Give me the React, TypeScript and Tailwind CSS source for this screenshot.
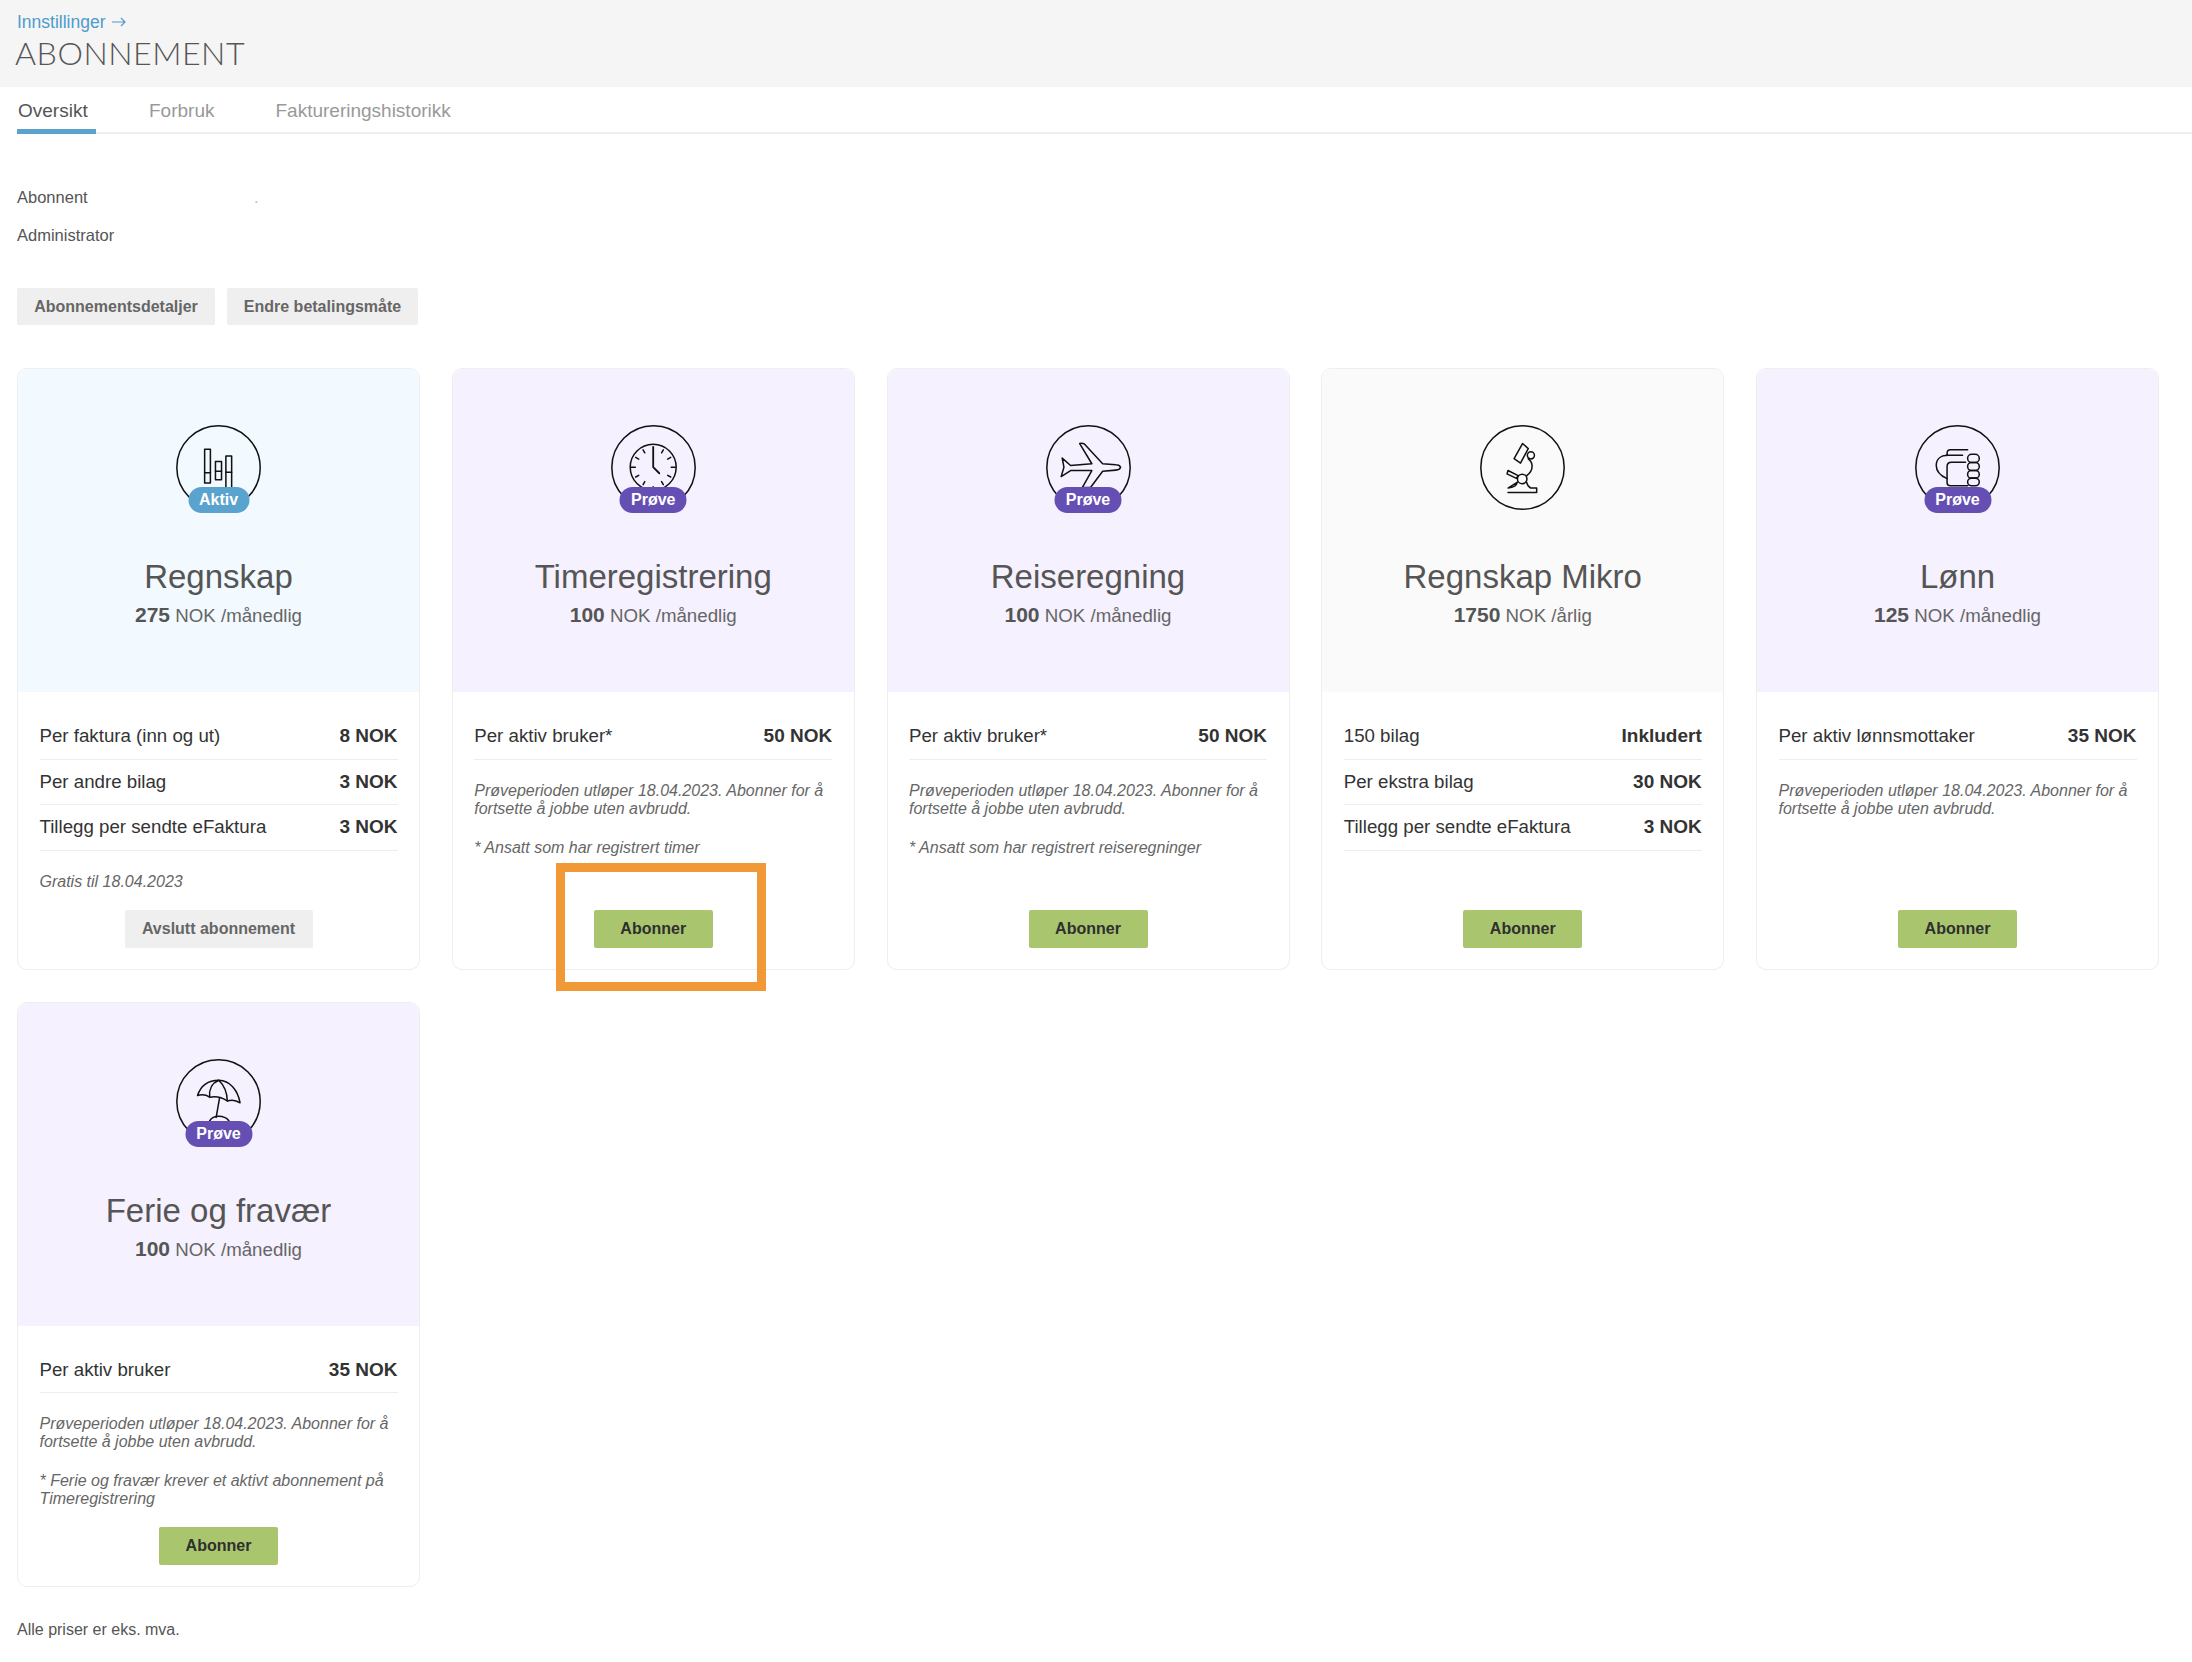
import React from 'react';

type Row = { label: string; value: string };

type Plan = {
  name: string;
  price: string;
  period: string;
  badge?: 'Aktiv' | 'Prøve';
  headerBg: string;
  icon: React.ReactNode;
  rows: Row[];
  notes: string[][];
  action: 'subscribe' | 'cancel';
  highlighted?: boolean;
};

const BarsIcon = (
  <>
    <rect x="28.3" y="24" width="5.7" height="33.3" />
    <path d="M28.3 47.3H34" />
    <rect x="39" y="36" width="6" height="18" />
    <path d="M39 45.7H45" />
    <rect x="49.3" y="30.7" width="5.7" height="33.3" />
    <path d="M49.3 46.7H55" />
  </>
);

const ClockIcon = (
  <>
    <circle cx="41.7" cy="41.7" r="22.7" />
    <path d="M41.7 21.7V41.7L47.7 47.7" strokeWidth="1.8" />
    <path d="M41.7 61V65M20 41.7H24M59.5 41.7H63.5M51.7 24.5L50 27.5M59 32L56 33.7M59 51.4L56 49.7M51.7 59L50 56M31.7 24.5L33.4 27.5M24.4 32L27.4 33.7M24.4 51.4L27.4 49.7M31.7 59L33.4 56" />
  </>
);

const PlaneIcon = (
  <path d="M73.7 41.7C73 39.8 71.5 39.3 69 39.2L56 38.3L37.7 18.6C36.5 18 34.6 18 33.3 18.3L45.3 38.3L24.3 40L16 32.7L17.7 41.7L15 51L24.3 45H45.3L36 61.7H44L56 45.7L69 44.6C71.5 44.4 73 43.7 73.7 41.7Z" />
);

const MicroscopeIcon = (
  <>
    <path d="M42 18.3L47.7 23.3L40 37.7L33.7 33.3Z" />
    <circle cx="50.3" cy="30" r="3.5" />
    <path d="M47.7 33.5C52.5 37 53.5 44.5 46.2 50" />
    <circle cx="41.7" cy="53.3" r="4.7" />
    <path d="M27.7 45L37.7 50L36 52.7L26.7 48.3Z" />
    <path d="M27.7 66.7H56V62.3H50C47.5 61 46.6 59 46 56.5M37 56.5C36.2 60 33.5 61.8 27.7 62.3Z" />
  </>
);

const HandIcon = (
  <>
    <path d="M52 24.5H35C32.8 24.5 31.7 25.8 31.7 28V30M47 30H33C24 30 21 35 21 40C21 46 25 50 31.7 53V57C31.7 59 32.8 60 35 60H52" />
    <path d="M31.7 53V41C31.7 38 33 36.7 36 36.7H50" />
    <rect x="52" y="29" width="11.5" height="8" rx="4" />
    <rect x="52" y="37" width="11.5" height="8" rx="4" />
    <rect x="52" y="45" width="11.5" height="7.5" rx="3.7" />
    <rect x="52" y="52.5" width="11.5" height="7.5" rx="3.7" />
  </>
);

const UmbrellaIcon = (
  <>
    <path d="M21.3 36C25 25 33 21 42.3 21C53 21.5 61 30 63.3 43.3C60 41 55 40 50.7 41.5C45 37.5 39 36.5 33.3 37.7C30 35.5 25 35 21.3 36Z" />
    <path d="M42.3 21C35 24 32.5 31 33.3 37.7M42.3 21C47.5 26 50.5 33 50.7 41.5" />
    <path d="M43 38.7L39.7 57.7M33.3 61C37 55.5 47 55 52.3 61" />
  </>
);

const TRIAL = 'Prøveperioden utløper 18.04.2023. Abonner for å';
const TRIAL_END = 'fortsette å jobbe uten avbrudd.';

const plans: Plan[] = [
  {
    name: 'Regnskap',
    price: '275',
    period: '/månedlig',
    badge: 'Aktiv',
    headerBg: 'bg-[#f2faff]',
    icon: BarsIcon,
    rows: [
      { label: 'Per faktura (inn og ut)', value: '8 NOK' },
      { label: 'Per andre bilag', value: '3 NOK' },
      { label: 'Tillegg per sendte eFaktura', value: '3 NOK' },
    ],
    notes: [['Gratis til 18.04.2023']],
    action: 'cancel',
  },
  {
    name: 'Timeregistrering',
    price: '100',
    period: '/månedlig',
    badge: 'Prøve',
    headerBg: 'bg-[#f5f1fe]',
    icon: ClockIcon,
    rows: [{ label: 'Per aktiv bruker*', value: '50 NOK' }],
    notes: [[TRIAL, TRIAL_END], ['* Ansatt som har registrert timer']],
    action: 'subscribe',
    highlighted: true,
  },
  {
    name: 'Reiseregning',
    price: '100',
    period: '/månedlig',
    badge: 'Prøve',
    headerBg: 'bg-[#f5f1fe]',
    icon: PlaneIcon,
    rows: [{ label: 'Per aktiv bruker*', value: '50 NOK' }],
    notes: [[TRIAL, TRIAL_END], ['* Ansatt som har registrert reiseregninger']],
    action: 'subscribe',
  },
  {
    name: 'Regnskap Mikro',
    price: '1750',
    period: '/årlig',
    headerBg: 'bg-[#fafafa]',
    icon: MicroscopeIcon,
    rows: [
      { label: '150 bilag', value: 'Inkludert' },
      { label: 'Per ekstra bilag', value: '30 NOK' },
      { label: 'Tillegg per sendte eFaktura', value: '3 NOK' },
    ],
    notes: [],
    action: 'subscribe',
  },
  {
    name: 'Lønn',
    price: '125',
    period: '/månedlig',
    badge: 'Prøve',
    headerBg: 'bg-[#f5f1fe]',
    icon: HandIcon,
    rows: [{ label: 'Per aktiv lønnsmottaker', value: '35 NOK' }],
    notes: [[TRIAL, TRIAL_END]],
    action: 'subscribe',
  },
  {
    name: 'Ferie og fravær',
    price: '100',
    period: '/månedlig',
    badge: 'Prøve',
    headerBg: 'bg-[#f5f1fe]',
    icon: UmbrellaIcon,
    rows: [{ label: 'Per aktiv bruker', value: '35 NOK' }],
    notes: [
      [TRIAL, TRIAL_END],
      ['* Ferie og fravær krever et aktivt abonnement på', 'Timeregistrering'],
    ],
    action: 'subscribe',
  },
];

function PlanCard({ plan }: { plan: Plan }) {
  return (
    <div className="flex flex-col rounded-[10px] border border-[#eeeeee] bg-white">
      <div className={`flex h-[323px] flex-col items-center rounded-t-[10px] pt-[56px] ${plan.headerBg}`}>
        <div className="relative h-[85px] w-[85px]">
          <svg
            viewBox="0 0 84 84"
            className="h-[85px] w-[85px]"
            fill="none"
            stroke="#111111"
            strokeWidth="1.5"
            strokeLinejoin="round"
            strokeLinecap="round"
          >
            <circle cx="42" cy="42" r="41.2" />
            {plan.icon}
          </svg>
          {plan.badge && (
            <span
              className={`absolute left-1/2 top-[62px] flex h-[26px] -translate-x-1/2 items-center justify-center rounded-full text-[16px] font-bold text-white ${
                plan.badge === 'Aktiv' ? 'w-[61px] bg-[#5aa3cf]' : 'w-[67px] bg-[#654fb3]'
              }`}
            >
              {plan.badge}
            </span>
          )}
        </div>
        <h2 className="mt-[45px] text-[33px] leading-[44px] font-normal text-[#555555]">{plan.name}</h2>
        <p className="mt-[3px] text-[18.7px] leading-[26px] text-[#666666]">
          <span className="text-[21px] font-bold text-[#555555]">{plan.price}</span> NOK {plan.period}
        </p>
      </div>
      <div className="flex flex-1 flex-col px-[21.5px] pt-[22px] pb-[21px]">
        {plan.rows.map((row) => (
          <div
            key={row.label}
            className="flex h-[45.5px] items-center justify-between border-b border-[#eeeeee] text-[18.7px] text-[#333333]"
          >
            <span>{row.label}</span>
            <span className="text-[19px] font-bold">{row.value}</span>
          </div>
        ))}
        {plan.notes.map((lines, i) => (
          <p key={i} className={`text-[16px] leading-[18px] text-[#666666] italic ${i === 0 ? 'mt-[22px]' : 'mt-[21px]'}`}>
            {lines.map((line) => (
              <span key={line} className="block whitespace-nowrap">
                {line}
              </span>
            ))}
          </p>
        ))}
        <div className="mt-auto flex justify-center pt-[19px]">
          {plan.action === 'cancel' ? (
            <button className="h-[38px] w-[188px] rounded-[2px] bg-[#efefef] text-[16px] font-bold text-[#666666]">
              Avslutt abonnement
            </button>
          ) : (
            <div className="relative">
              <button className="h-[38px] w-[119px] rounded-[2px] bg-[#a9c66f] text-[16px] font-bold text-[#2f2f2f]">
                Abonner
              </button>
              {plan.highlighted && (
                <div className="pointer-events-none absolute top-[-47px] right-[-53px] bottom-[-43px] left-[-38px] border-[9px] border-[#f19937]" />
              )}
            </div>
          )}
        </div>
      </div>
    </div>
  );
}

export default function App() {
  return (
    <div className="min-h-[1662px] bg-white font-['Liberation_Sans',sans-serif]">
      <header className="h-[87px] bg-[#f5f5f5] px-[17px] pt-[11px]">
        <a className="flex h-[22px] items-center gap-[6px] text-[17.5px] text-[#4d9ccb]">
          Innstillinger
          <svg viewBox="0 0 14 10" className="h-[10px] w-[14px]" fill="none" stroke="#4d9ccb" strokeWidth="1.2">
            <path d="M0 5H13M9 1L13 5L9 9" />
          </svg>
        </a>
        <h1 className="ml-[-2px] font-['Lato',sans-serif] text-[32.2px] leading-[40px] font-light tracking-[0.5px] text-[#555555]">
          ABONNEMENT
        </h1>
      </header>

      <nav className="ml-[17px] flex h-[47px] items-stretch border-b-2 border-[#eeeeee] text-[19px]">
        <a className="mb-[-2px] flex w-[79px] items-center border-b-[5px] border-[#5ba3cc] pl-px pt-[7px] text-[#555555]">
          Oversikt
        </a>
        <a className="ml-[53px] flex items-center pt-[3px] text-[#999999]">Forbruk</a>
        <a className="ml-[61px] flex items-center pt-[3px] text-[#999999]">Faktureringshistorikk</a>
      </nav>

      <main className="px-[17px]">
        <dl className="mt-[44px] text-[16.5px] leading-[38px] text-[#555555]">
          <div className="flex">
            <dt className="w-[237px]">Abonnent</dt>
            <dd className="text-[#bbbbbb]">.</dd>
          </div>
          <div>
            <dt>Administrator</dt>
          </div>
        </dl>

        <div className="mt-[34px] flex gap-3">
          <button className="h-[37px] w-[198px] rounded-[2px] bg-[#efefef] text-[16px] font-bold text-[#666666]">
            Abonnementsdetaljer
          </button>
          <button className="h-[37px] w-[191px] rounded-[2px] bg-[#efefef] text-[16px] font-bold text-[#666666]">
            Endre betalingsmåte
          </button>
        </div>

        <div className="mt-[43px] grid w-[2142px] grid-cols-5 gap-x-[31.75px] gap-y-[32px]">
          {plans.map((plan) => (
            <PlanCard key={plan.name} plan={plan} />
          ))}
        </div>

        <p className="mt-[31px] text-[16px] text-[#555555]">Alle priser er eks. mva.</p>
      </main>
    </div>
  );
}
